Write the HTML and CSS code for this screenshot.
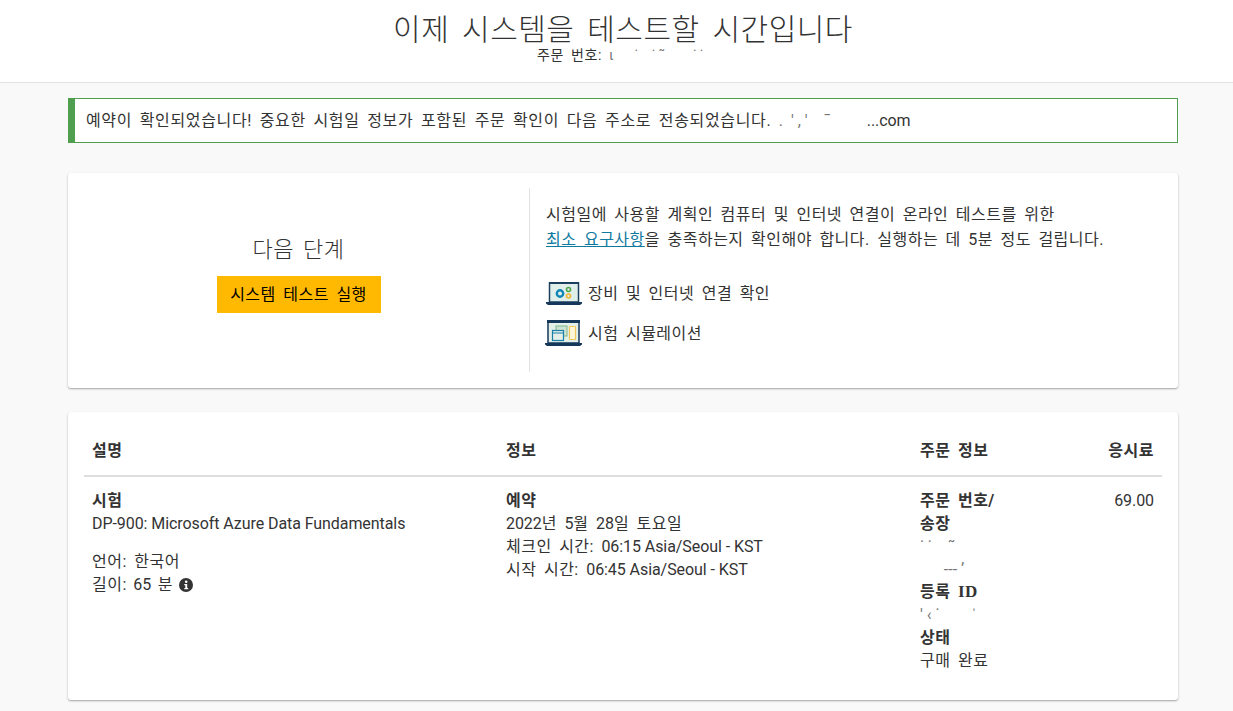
FILE: index.html
```html
<!DOCTYPE html>
<html lang="ko">
<head>
<meta charset="utf-8">
<title>시스템 테스트</title>
<link rel="stylesheet" href="styles.css">
</head>
<body>
<header class="top">
  <h1 class="title">이제 시스템을 테스트할 시간입니다</h1>
  <p class="order">주문 번호: <span class="smudge">ι &nbsp;&nbsp;&nbsp;&nbsp; ˙ &nbsp;&nbsp; ˙ ˜ &nbsp;&nbsp;&nbsp;&nbsp;&nbsp;&nbsp; ˙ ˙</span></p>
</header>
<main class="page">
  <div class="alert"><span class="alert-text">예약이 확인되었습니다! 중요한 시험일 정보가 포함된 주문 확인이 다음 주소로 전송되었습니다.</span> <span class="smudge mail">. &nbsp;' , ' &nbsp;&nbsp; ˉ</span><span class="latin">...com</span></div>

  <section class="card next">
    <div class="next-left">
      <h2 class="next-title">다음 단계</h2>
      <a class="btn" href="#">시스템 테스트 실행</a>
    </div>
    <div class="next-right">
      <p class="lead">시험일에 사용할 계획인 컴퓨터 및 인터넷 연결이 온라인 테스트를 위한<br><a class="link" href="#">최소 요구사항</a>을 충족하는지 확인해야 합니다. 실행하는 데 5분 정도 걸립니다.</p>
      <div class="feature">
        <svg class="ico" width="36" height="24" viewBox="0 0 36 24">
          <rect x="3.500" y="2" width="29" height="19" fill="#e0efe9" stroke="#1c3f5f" stroke-width="1.500"/>
          <path d="M3 1h30v2H3z" fill="#1c3f5f"/>
          <path d="M0 21h36v1.500l-2 1.500H2L0 22.500z" fill="#14375a"/>
          <circle cx="14" cy="12.500" r="3.200" fill="none" stroke="#0f86b5" stroke-width="2.400"/>
          <circle cx="22.500" cy="8.500" r="2" fill="none" stroke="#4da64d" stroke-width="1.600"/>
          <circle cx="22.500" cy="15" r="2" fill="none" stroke="#f2b632" stroke-width="1.600"/>
        </svg>
        <span>장비 및 인터넷 연결 확인</span>
      </div>
      <div class="feature">
        <svg class="ico ico-wide" width="37" height="26" viewBox="0 0 37 26">
          <rect x="3" y="1" width="31" height="22" fill="#e3f0ea" stroke="#14375a" stroke-width="1.500"/>
          <path d="M2 0h33v3H2z" fill="#14375a"/>
          <path d="M0 23h37v1.500l-2 1.500H2l-2-1.500z" fill="#14375a"/>
          <rect x="11" y="6" width="11" height="10" fill="#cfe3d3" stroke="#7fb58a" stroke-width="1"/>
          <rect x="7.500" y="10.500" width="11" height="10" fill="#e3f0ea" stroke="#1a7fa8" stroke-width="1.200"/>
          <path d="M7.500 13h11" stroke="#1a7fa8"/>
          <rect x="24.500" y="6.500" width="6" height="13" rx=".5" fill="#fff7d9" stroke="#f2c75c" stroke-width="1.200"/>
        </svg>
        <span>시험 시뮬레이션</span>
      </div>
    </div>
  </section>

  <section class="card details">
    <div class="thead">
      <div>설명</div>
      <div>정보</div>
      <div>주문 정보</div>
      <div class="right">응시료</div>
    </div>
    <div class="tbody">
      <div>
        <div class="strong">시험</div>
        <div class="latin">DP-900: Microsoft Azure Data Fundamentals</div>
        <div class="meta">언어: 한국어</div>
        <div class="duration">길이: <span class="latin">65</span> 분
          <svg class="info" width="14" height="14" viewBox="0 0 14 14">
            <circle cx="7" cy="7" r="7" fill="#333"/>
            <circle cx="7.200" cy="3.700" r="1.300" fill="#fff"/>
            <path d="M5.300 6h2.900v4h1v1.300H5.300V10h1V7.300h-1z" fill="#fff"/>
          </svg>
        </div>
      </div>
      <div>
        <div class="strong">예약</div>
        <div><span class="latin">2022</span>년 <span class="latin">5</span>월 <span class="latin">28</span>일 토요일</div>
        <div>체크인 시간: <span class="latin">06:15 Asia/Seoul - KST</span></div>
        <div>시작 시간: <span class="latin">06:45 Asia/Seoul - KST</span></div>
      </div>
      <div class="order-col">
        <div class="strong nowrap">주문 번호/<br>송장</div>
        <div class="smudge nowrap">˙ ˙ &nbsp;&nbsp; ˜</div>
        <div class="smudge nowrap">&nbsp;&nbsp;&nbsp;&nbsp;&nbsp; ‐‐‐ ʼ</div>
        <div class="strong">등록 <span class="serif">ID</span></div>
        <div class="smudge nowrap">' ‹ ˙ &nbsp;&nbsp;&nbsp;&nbsp;&nbsp;&nbsp; ˈ</div>
        <div class="strong">상태</div>
        <div>구매 완료</div>
      </div>
      <div class="right latin">69.00</div>
    </div>
  </section>
</main>
</body>
</html>
```
FILE: styles.css
```css
* { box-sizing: border-box; }
html, body { margin: 0; padding: 0; }
body {
  background: #f9f9f9;
  color: #333;
  font-family: Roboto, "Noto Sans CJK KR", sans-serif;
  font-size: 16px;
  line-height: 1.42857;
  letter-spacing: .5px;
  word-spacing: 3px;
  height: 711px;
  overflow: hidden;
}
.top {
  background: #fff;
  border-bottom: 1px solid #e2e2e2;
  height: 83px;
  padding: 12px 0 0 13px;
  text-align: center;
}
.title {
  margin: 0;
  font-size: 30px;
  font-weight: 300;
  line-height: 36px;
  word-spacing: 5px;
}
.order {
  margin: 0;
  font-size: 14px;
  line-height: 14px;
  letter-spacing: .6px;
}
.order .smudge { display: inline-block; width: 100px; text-align: left; }
.smudge { color: #777; word-spacing: 0; letter-spacing: 0; }
.mail { display: inline-block; width: 88px; }
.nowrap { white-space: nowrap; }
.latin { word-spacing: 0; letter-spacing: -.07px; }
.page {
  padding: 15px 55px 0 68px;
}
.alert {
  background: #fff;
  border: 1px solid #4f9f4f;
  border-left-width: 7px;
  height: 45px;
  padding-left: 11px;
  line-height: 43px;
  margin-bottom: 30px;
}
.alert-text { letter-spacing: .65px; }
.card {
  background: #fff;
  border-radius: 3px;
  box-shadow: 0 1px 2px rgba(0, 0, 0, .35);
}
.next {
  display: flex;
  height: 215px;
  padding: 15px 0 16px;
  margin-bottom: 24px;
}
.next-left {
  width: 462px;
  border-right: 1px solid #e2e2e2;
  text-align: center;
  padding-top: 47px;
}
.next-title {
  margin: 0 0 11px;
  font-size: 22px;
  font-weight: 300;
  line-height: 30px;
}
.btn {
  display: inline-block;
  width: 164px;
  height: 37px;
  background: #ffb900;
  color: #000;
  text-decoration: none;
  line-height: 37px;
}
.next-right {
  padding: 14px 0 0 16px;
}
.lead {
  margin: 0 0 28px;
  line-height: 25px;
}
.link { color: #0f7a9e; }
.feature {
  display: flex;
  align-items: center;
  height: 26px;
  margin-bottom: 14px;
  line-height: 24px;
}
.feature span { padding-top: 1px; }
.ico { margin-right: 6px; flex: none; }
.ico-wide { margin-left: -1px; }
.details {
  height: 288px;
  padding: 16px 16px 0;
}
.thead, .tbody {
  display: grid;
  grid-template-columns: 414px 414px 90px 1fr;
}
.thead {
  height: 49px;
  border-bottom: 2px solid #dedede;
  font-weight: 700;
  line-height: 46px;
}
.thead > div, .tbody > div { padding: 0 8px; }
.tbody { padding-top: 13px; }
.strong { font-weight: 700; }
.serif { font-family: "Liberation Serif", serif; font-size: 17px; line-height: 0; }
.meta { margin-top: 15px; }
.duration { word-spacing: 2px; }
.right { text-align: right; }
.info { vertical-align: -2px; }
```
